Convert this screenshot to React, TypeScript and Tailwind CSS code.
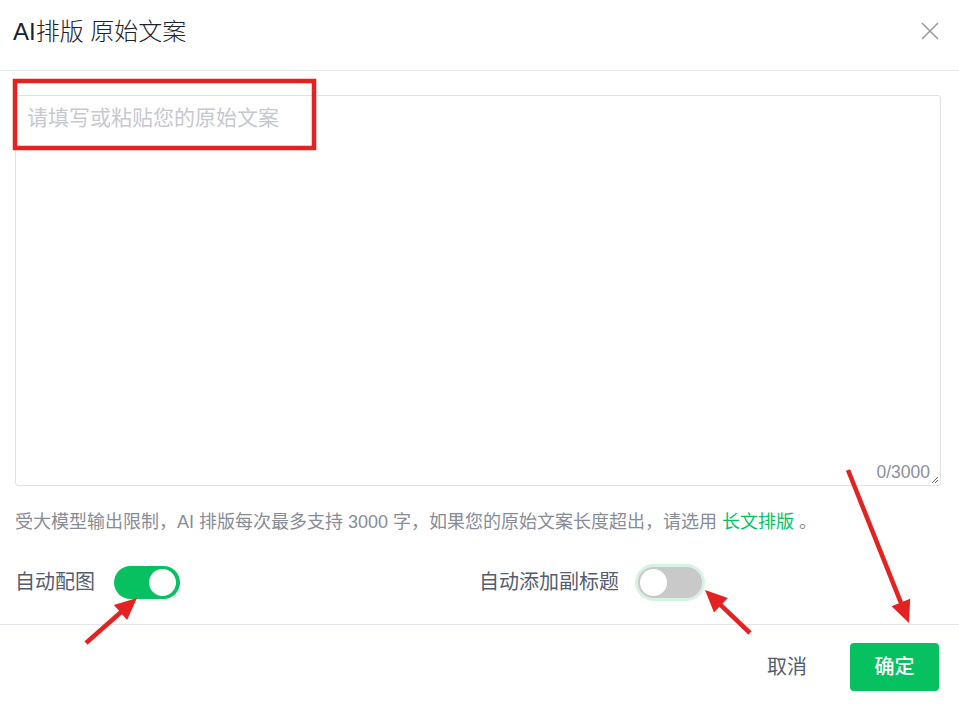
import React from 'react';

const FONT = { fontFamily: '"Liberation Sans", "Noto Sans CJK SC", sans-serif' };

type Pt = [number, number];

// red annotation arrow: line from tail to tip, with a filled head
const Arrow: React.FC<{ from: Pt; to: Pt }> = ({ from, to }) => {
  const [x1, y1] = from;
  const [x2, y2] = to;
  const len = Math.hypot(x2 - x1, y2 - y1);
  const ux = (x2 - x1) / len;
  const uy = (y2 - y1) / len;
  const head = 22;
  const half = 10;
  const bx = x2 - ux * head;
  const by = y2 - uy * head;
  const pts = `${x2},${y2} ${bx - uy * half},${by + ux * half} ${bx + uy * half},${by - ux * half}`;
  return (
    <g>
      <line x1={x1} y1={y1} x2={bx + ux * 2} y2={by + uy * 2} stroke="#e52222" strokeWidth={4.5} />
      <polygon points={pts} fill="#e52222" />
    </g>
  );
};

const Toggle: React.FC<{ on: boolean }> = ({ on }) => (
  <div
    className={
      on
        ? 'w-[66px] h-[33px] rounded-full bg-[#07c160] flex items-center justify-end px-[4px]'
        : 'w-[64px] h-[31px] rounded-full bg-[#c9c9c9] ring-[3px] ring-[#d4f3e2] flex items-center justify-start px-[2px]'
    }
  >
    <div className="w-[27px] h-[27px] rounded-full bg-white" />
  </div>
);

export default function App() {
  return (
    <div className="relative w-[959px] h-[704px] bg-white overflow-hidden flex flex-col" style={FONT}>
      {/* Header */}
      <div className="h-[71px] border-b border-[#e5e6eb] flex items-start justify-between pl-[13px] pr-[20px] pt-[17px]">
        <h2 className="text-[24px] leading-[30px] font-light text-[#1d2129]">AI排版 原始文案</h2>
        <svg width="18" height="18" viewBox="0 0 18 18" className="mt-[5px]">
          <path d="M1 1 L17 17 M17 1 L1 17" stroke="#9a9a9a" strokeWidth="1.6" fill="none" />
        </svg>
      </div>

      {/* Body */}
      <div className="px-[15px] pt-[24px]">
        <div className="relative w-[926px] h-[391px] border border-[#e0e2e6] rounded-[3px] flex flex-col">
          <div className="flex-1 pl-[11px] pt-[7px] text-[21px] leading-[30px] text-[#c6c9cf]">
            请填写或粘贴您的原始文案
          </div>
          <div className="self-end pr-[10px] pb-[3px] text-[17.5px] leading-[20px] text-[#8a8f99]">0/3000</div>
          <svg width="8" height="8" viewBox="0 0 8 8" className="absolute right-[1px] bottom-[1px]">
            <path d="M7 1 L1 7 M7 4 L4 7" stroke="#666" strokeWidth="1" fill="none" />
          </svg>
        </div>

        <p className="mt-[24px] text-[18px] leading-[24px] text-[#888c96]">
          受大模型输出限制，AI 排版每次最多支持 3000 字，如果您的原始文案长度超出，请选用{' '}
          <span className="text-[#07c160]">长文排版</span> 。
        </p>

        <div className="mt-[30px] h-[36px] flex items-center">
          <div className="w-[464px] flex items-center gap-[19px]">
            <span className="text-[20px] leading-[28px] text-[#555c6e]">自动配图</span>
            <Toggle on />
          </div>
          <div className="flex items-center gap-[19px]">
            <span className="text-[20px] leading-[28px] text-[#555c6e]">自动添加副标题</span>
            <Toggle on={false} />
          </div>
        </div>
      </div>

      {/* Footer */}
      <div className="mt-[24px] border-t border-[#e5e6eb] flex justify-end items-center gap-[43px] pr-[20px] pt-[18px]">
        <button className="text-[20px] leading-[28px] text-[#555c6e]">取消</button>
        <button className="w-[89px] h-[48px] rounded-[4px] bg-[#07c160] text-white text-[20px] font-medium">确定</button>
      </div>

      {/* Red annotation overlay */}
      <svg className="absolute inset-0 pointer-events-none" width="959" height="704">
        <rect x="15" y="81" width="299" height="67" fill="none" stroke="#e52222" strokeWidth="4.5" />
        <Arrow from={[86, 643]} to={[137, 598]} />
        <Arrow from={[750, 633]} to={[705, 590]} />
        <Arrow from={[848, 470]} to={[909, 623]} />
      </svg>
    </div>
  );
}
